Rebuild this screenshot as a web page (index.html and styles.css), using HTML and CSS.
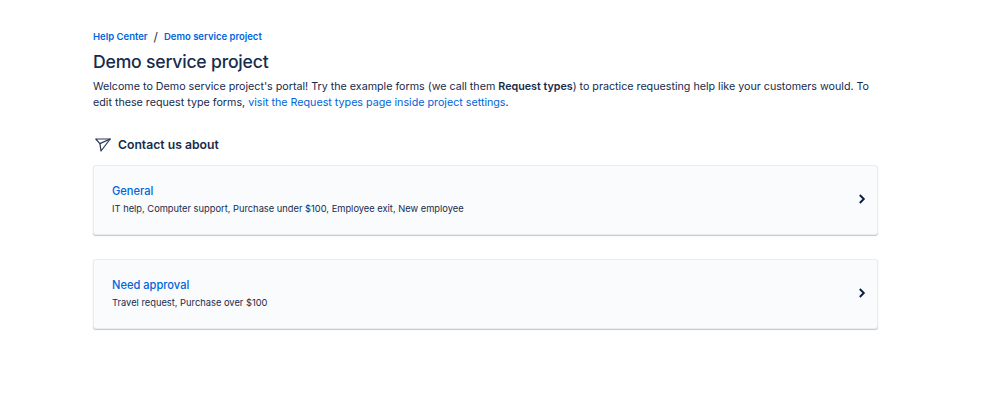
FILE: index.html
```html
<!DOCTYPE html>
<html lang="en">
<head>
<meta charset="utf-8">
<title>Demo service project</title>
<link rel="stylesheet" href="styles.css">
</head>
<body>
<main class="page">
  <nav class="crumbs">
    <a class="crumb" href="#">Help Center</a>
    <span class="sep">/</span>
    <a class="crumb" href="#">Demo service project</a>
  </nav>
  <h1 class="title">Demo service project</h1>
  <p class="intro">Welcome to Demo service project's portal! Try the example forms (we call them <strong>Request types</strong>) to practice requesting help like your customers would. To edit these request type forms, <a class="link" href="#">visit the Request types page inside project settings</a>.</p>
  <div class="section-head">
    <svg class="send" width="16" height="14" viewBox="0 0 16 14" fill="none" stroke="#253858" stroke-width="1.2" stroke-linejoin="round" stroke-linecap="round"><path d="M.8 1H15.2L6 13L4.9 5.6Z"/><path d="M4.9 5.6L15.2 1"/></svg>
    <h2 class="section-title">Contact us about</h2>
  </div>
  <a class="card" href="#">
    <div class="card-text">
      <div class="card-title">General</div>
      <div class="card-desc">IT help, Computer support, Purchase under $100, Employee exit, New employee</div>
    </div>
    <svg class="chev" width="8" height="12" viewBox="0 0 8 12" fill="none" stroke="#091e42" stroke-width="1.9"><path d="M1.8 2L5.8 6L1.8 10"/></svg>
  </a>
  <a class="card" href="#">
    <div class="card-text">
      <div class="card-title">Need approval</div>
      <div class="card-desc">Travel request, Purchase over $100</div>
    </div>
    <svg class="chev" width="8" height="12" viewBox="0 0 8 12" fill="none" stroke="#091e42" stroke-width="1.9"><path d="M1.8 2L5.8 6L1.8 10"/></svg>
  </a>
</main>
</body>
</html>
```
FILE: styles.css
```css
html, body { margin: 0; padding: 0; background: #fff; }
body { font-family: Inter, "Liberation Sans", sans-serif; color: #172b4d; height: 406px; overflow: hidden; }
.page { width: 785px; margin-left: 93px; padding-top: 29px; }
.crumbs { display: flex; align-items: center; height: 14px; font-size: 9.5px; font-weight: 600; }
.crumb { color: #0065d9; text-decoration: none; }
.sep { margin: 0 6px; font-size: 12px; font-weight: 400; }
.title { margin: 5px 0 0; font-size: 17.6px; line-height: 28px; font-weight: 500; letter-spacing: -0.2px; }
.intro { margin: 3px 0 0; font-size: 10.71px; line-height: 16px; }
.intro strong { font-weight: 600; }
.link { color: #0065d9; text-decoration: none; }
.section-head { display: flex; align-items: center; gap: 8px; margin-top: 24px; height: 20px; }
.send { margin-left: 2px; }
.section-title { margin: 0 0 0 -1px; font-size: 12.2px; line-height: 20px; font-weight: 600; }
.card { display: flex; align-items: center; justify-content: space-between; box-sizing: border-box; height: 70px; margin-top: 10px; padding: 0 11px 0 18px; background: #fafbfc; border: 1px solid #ebecf0; border-radius: 3px; box-shadow: 0 1px 1px rgba(9,30,66,.25); text-decoration: none; }
.card + .card { margin-top: 24px; }
.card-text { display: flex; flex-direction: column; gap: 3px; padding-bottom: 2px; }
.card-title { color: #0065d9; font-size: 11.1px; line-height: 16px; font-weight: 500; }
.card-desc { color: #172b4d; font-size: 9.32px; line-height: 14px; }
.chev { margin-top: -2px; }
```
